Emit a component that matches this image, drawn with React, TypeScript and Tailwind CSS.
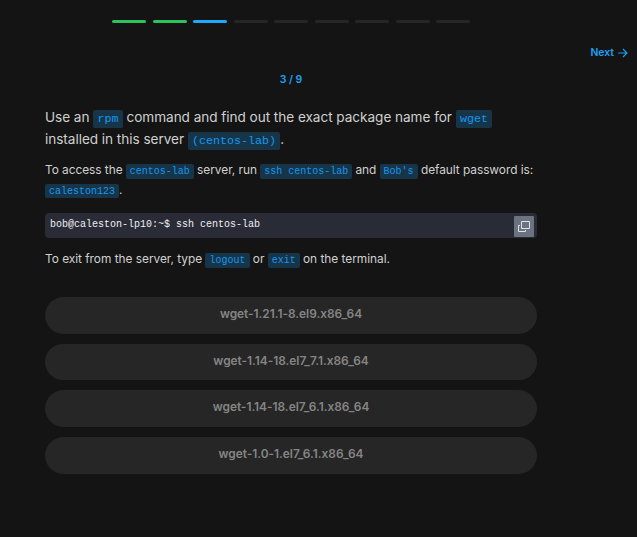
import type { ReactNode } from "react";

const steps = ["done", "done", "current", "todo", "todo", "todo", "todo", "todo", "todo"];

const stepColors: Record<string, string> = {
  done: "bg-[#2dc25c]",
  current: "bg-[#1fa8fd]",
  todo: "bg-[#262626]",
};

const options = [
  "wget-1.21.1-8.el9.x86_64",
  "wget-1.14-18.el7_7.1.x86_64",
  "wget-1.14-18.el7_6.1.x86_64",
  "wget-1.0-1.el7_6.1.x86_64",
];

const mono = "font-['Liberation_Mono',monospace]";

function BigCode({ children }: { children: ReactNode }) {
  return (
    <code className={`${mono} rounded-[2px] bg-[#173549] px-[4.25px] py-[2px] text-[11.67px] leading-none tracking-normal text-[#1597ee]`}>
      {children}
    </code>
  );
}

function Code({ children }: { children: ReactNode }) {
  return (
    <code className={`${mono} rounded-[2px] bg-[#173549] px-[4px] py-[1.7px] text-[10px] leading-none tracking-normal text-[#1597ee]`}>
      {children}
    </code>
  );
}

export default function App() {
  return (
    <div className="h-[537px] w-[637px] overflow-hidden bg-[#141414] font-['Inter',sans-serif] text-[#d0d0d0]">
      <div className="ml-[112px] flex w-[358.4px] gap-[6.6px] pt-[20px]">
        {steps.map((step, i) => (
          <div key={i} className={`h-[3px] flex-1 rounded-full ${stepColors[step]}`} />
        ))}
      </div>

      <div className="mt-[22px] flex h-4 items-center justify-end gap-[5px] pr-[9px] text-[10.4px] font-semibold text-[#1fa0f5]">
        <span className="-mr-px">Next</span>
        <svg width="10" height="10" viewBox="0 0 10 10" fill="none" stroke="currentColor" strokeWidth="1.1">
          <path d="M0.3 5H9M5 1L9 5L5 9" />
        </svg>
      </div>

      <main className="ml-[45px] w-[492px]">
        <div className="mt-[11px] h-4 text-center text-[10.5px] leading-4 font-semibold text-[#1fa0f5]">3 / 9</div>

        <p className="mt-[18px] text-[13.6px] leading-[22px] tracking-[-0.045px]">
          Use an <BigCode>rpm</BigCode> command and find out the exact package name for <BigCode>wget</BigCode>
          <br />
          installed in this server <BigCode>(centos-lab)</BigCode>.
        </p>

        <p className="mt-[10px] mb-[14px] text-[11.9px] leading-[19.5px] tracking-[-0.05px]">
          To access the <Code>centos-lab</Code> server, run <Code>ssh centos-lab</Code> and <Code>Bob's</Code> default
          password is:
          <br />
          <Code>caleston123</Code>.
        </p>

        <div className="flex h-[25px] items-start justify-between rounded-[4px] bg-[#292b37] pt-[3px] pr-[3px] pl-[5px]">
          <pre className={`${mono} pt-px text-[10px] leading-4 text-[#f0f0f0]`}>bob@caleston-lp10:~$ ssh centos-lab</pre>
          <button className="flex h-[21px] w-5 items-center justify-center rounded-[1px] bg-[#6b7280]">
            <svg width="12" height="12" viewBox="0 0 12 12" fill="none" stroke="#e0e1e4">
              <path d="M3.5 0.5H11.5V7.5H3.5ZM2 4.5H0.5V10.5H7.5V9" />
            </svg>
          </button>
        </div>

        <p className="mt-[11px] text-[11.9px] leading-[20px] tracking-[-0.03px]">
          To exit from the server, type <Code>logout</Code> or <Code>exit</Code> on the terminal.
        </p>

        <div className="mt-[28px] flex flex-col gap-[10.07px]">
          {options.map((option) => (
            <button
              key={option}
              className="h-[36.6px] rounded-full bg-[#262626] pb-[2.4px] text-[11.9px] font-semibold tracking-[-0.02px] text-[#858585]"
            >
              {option}
            </button>
          ))}
        </div>
      </main>
    </div>
  );
}
